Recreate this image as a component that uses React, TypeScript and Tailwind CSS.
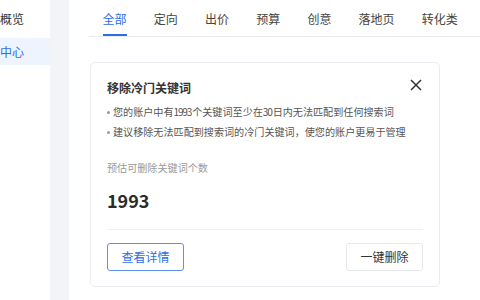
import React from "react"

const tabs = ["全部", "定向", "出价", "预算", "创意", "落地页", "转化类"]

// 数字字宽较窄，单独收紧字距
function Num({ children }: { children: string }) {
  return <span className="tracking-[-1.2px] pr-[1px]">{children}</span>
}

export default function App() {
  return (
    <div className="flex h-[300px] w-[480px] overflow-hidden bg-white font-['Noto_Sans_CJK_SC',sans-serif] text-[#333]">
      {/* 左侧菜单 (被截断) */}
      <div className="w-[50px] shrink-0 bg-white pt-[5px]">
        <div className="flex h-[27px] items-center text-[12px] text-[#333]">概览</div>
        <div className="mt-[6px] flex h-[27px] items-center bg-[#eef4fe] text-[12px] text-[#2f6de6]">中心</div>
      </div>

      <div className="w-[19px] shrink-0 bg-[#f3f4f8]" />

      <div className="flex-1 pl-[20px]">
        {/* 标签页 */}
        <div className="flex h-[37px] border-b border-[#e9ebf0]">
          {tabs.map((t, i) => (
            <div key={t} className="flex flex-col items-center px-[13.6px]">
              <div className={`mt-[10px] h-[18px] text-[12px] leading-[18px] ${i === 0 ? "text-[#2f6de6]" : "text-[#444]"}`}>
                {t}
              </div>
              {i === 0 && <div className="mt-[6px] h-[2px] w-full bg-[#2f6de6]" />}
            </div>
          ))}
        </div>

        {/* 建议卡片 */}
        <div className="ml-[1px] mt-[25px] w-[350px] rounded-[5px] border border-[#eaecf1] px-[16px] pb-[15px] pt-[16px]">
          <div className="flex items-start justify-between">
            <div className="text-[12px] font-bold leading-[18px] text-[#333]">移除冷门关键词</div>
            <svg width="12" height="12" viewBox="0 0 12 12" className="mr-[1px]">
              <path d="M1 1L11 11M11 1L1 11" stroke="#333" strokeWidth="1.5" />
            </svg>
          </div>
          <div className="mt-[5px] text-[10.1px] leading-[20px] text-[#555]">
            <div className="flex items-center">
              <span className="mr-[3px] h-[3px] w-[3px] rounded-full bg-[#999]" />
              <span>
                您的账户中有<Num>1993</Num>个关键词至少在<Num>30</Num>日内无法匹配到任何搜索词
              </span>
            </div>
            <div className="flex items-center">
              <span className="mr-[3px] h-[3px] w-[3px] rounded-full bg-[#999]" />
              <span>建议移除无法匹配到搜索词的冷门关键词，使您的账户更易于管理</span>
            </div>
          </div>
          <div className="mt-[16px] text-[10.1px] leading-[20px] text-[#999]">预估可删除关键词个数</div>
          <div className="mt-[10px] text-[18px] font-bold leading-[24px] text-[#2b2b2b]">1993</div>
          <div className="mt-[17px] h-px bg-[#eef0f4]" />
          <div className="mt-[13px] flex justify-between">
            <button className="h-[28px] w-[77px] rounded-[3px] border border-[#5d8ff0] text-[12px] text-[#2f6de6]">
              查看详情
            </button>
            <button className="h-[28px] w-[77px] rounded-[3px] border border-[#e6e8ee] text-[12px] text-[#333]">
              一键删除
            </button>
          </div>
        </div>
      </div>
    </div>
  )
}
